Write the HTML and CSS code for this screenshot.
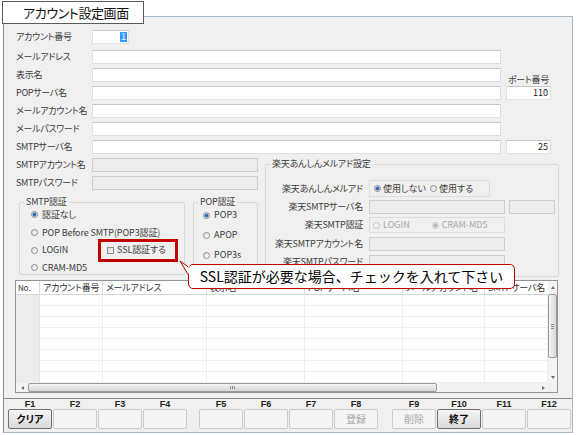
FILE: index.html
```html
<!DOCTYPE html>
<html lang="ja">
<head>
<meta charset="utf-8">
<title>アカウント設定画面</title>
<link rel="stylesheet" href="styles.css">
</head>
<body>
<div class="title">アカウント設定画面</div>
<div class="window">
  <div class="form">
    <div class="row r1"><span class="lbl">アカウント番号</span><span class="in num"><span class="sel">1</span></span></div>
    <div class="row r2"><span class="lbl">メールアドレス</span><span class="in long"></span></div>
    <div class="row"><span class="lbl">表示名</span><span class="in long"></span><span class="portlbl">ポート番号</span></div>
    <div class="row"><span class="lbl">POPサーバ名</span><span class="in long"></span><span class="in port">110</span></div>
    <div class="row"><span class="lbl">メールアカウント名</span><span class="in long"></span></div>
    <div class="row"><span class="lbl">メールパスワード</span><span class="in long"></span></div>
    <div class="row"><span class="lbl">SMTPサーバ名</span><span class="in long"></span><span class="in port">25</span></div>
    <div class="lower">
      <div class="lcol">
        <div class="row r1"><span class="lbl">SMTPアカウント名</span><span class="in mid dis"></span></div>
        <div class="row"><span class="lbl">SMTPパスワード</span><span class="in mid dis"></span></div>
        <div class="groups">
          <div class="group smtp">
            <div class="legend">SMTP認証</div>
            <div class="opt"><i class="rd on"></i>認証なし</div>
            <div class="opt"><i class="rd"></i>POP Before SMTP(POP3認証)</div>
            <div class="opt"><i class="rd"></i>LOGIN<span class="ssl"><i class="cb"></i>SSL認証する</span></div>
            <div class="opt"><i class="rd"></i>CRAM-MD5</div>
          </div>
          <div class="group pop">
            <div class="legend">POP認証</div>
            <div class="popt"><i class="rd on"></i>POP3</div>
            <div class="popt"><i class="rd"></i>APOP</div>
            <div class="popt"><i class="rd"></i>POP3s</div>
          </div>
        </div>
      </div>
      <div class="rgroup">
        <div class="legend">楽天あんしんメルアド設定</div>
        <div class="rrow rr1"><span class="rl">楽天あんしんメルアド</span><span class="rpanel p1"><i class="rd on"></i><span>使用しない</span><i class="rd r2nd"></i><span>使用する</span></span></div>
        <div class="rrow rr2"><span class="rl">楽天SMTPサーバ名</span><span class="in rin dis"></span><span class="in rsmall dis"></span></div>
        <div class="rrow rr3"><span class="rl">楽天SMTP認証</span><span class="rpanel p2 gray"><i class="rd dis"></i><span>LOGIN</span><i class="rd dis on r2nd2"></i><span>CRAM-MD5</span></span></div>
        <div class="rrow rr4"><span class="rl">楽天SMTPアカウント名</span><span class="in rin dis"></span></div>
        <div class="rrow rr4"><span class="rl">楽天SMTPパスワード</span><span class="in rin dis"></span></div>
      </div>
    </div>
  </div>

  <div class="grid">
    <div class="gmain">
      <div class="gtable">
        <div class="ghead">
          <span class="c c1">No.</span><span class="c c2">アカウント番号</span><span class="c c3">メールアドレス</span><span class="c c4">表示名</span><span class="c c5">POPサーバ名</span><span class="c c6">メールアカウント名</span><span class="c c7">SMTPサーバ名</span>
        </div>
        <div class="grow"><span class="c c1"></span><span class="c c2"></span><span class="c c3"></span><span class="c c4"></span><span class="c c5"></span><span class="c c6"></span><span class="c c7"></span></div>
        <div class="grow"><span class="c c1"></span><span class="c c2"></span><span class="c c3"></span><span class="c c4"></span><span class="c c5"></span><span class="c c6"></span><span class="c c7"></span></div>
        <div class="grow"><span class="c c1"></span><span class="c c2"></span><span class="c c3"></span><span class="c c4"></span><span class="c c5"></span><span class="c c6"></span><span class="c c7"></span></div>
        <div class="grow"><span class="c c1"></span><span class="c c2"></span><span class="c c3"></span><span class="c c4"></span><span class="c c5"></span><span class="c c6"></span><span class="c c7"></span></div>
        <div class="grow"><span class="c c1"></span><span class="c c2"></span><span class="c c3"></span><span class="c c4"></span><span class="c c5"></span><span class="c c6"></span><span class="c c7"></span></div>
        <div class="grow"><span class="c c1"></span><span class="c c2"></span><span class="c c3"></span><span class="c c4"></span><span class="c c5"></span><span class="c c6"></span><span class="c c7"></span></div>
        <div class="grow"><span class="c c1"></span><span class="c c2"></span><span class="c c3"></span><span class="c c4"></span><span class="c c5"></span><span class="c c6"></span><span class="c c7"></span></div>
        <div class="grow"><span class="c c1"></span><span class="c c2"></span><span class="c c3"></span><span class="c c4"></span><span class="c c5"></span><span class="c c6"></span><span class="c c7"></span></div>
      </div>
      <div class="vscroll">
        <div class="vs-up"><i class="tri-up"></i></div>
        <div class="vs-thumb"><i class="grip-h"></i></div>
        <div class="vs-track"></div>
        <div class="vs-down"><i class="tri-down"></i></div>
      </div>
    </div>
    <div class="hrow">
      <div class="hscroll">
        <div class="hs-left"><i class="tri-left"></i></div>
        <div class="hs-thumb"><i class="grip-v"></i></div>
        <div class="hs-track"></div>
        <div class="hs-right"><i class="tri-right"></i></div>
      </div>
      <div class="corner"></div>
    </div>
  </div>

  <div class="fkeys">
    <div class="fgroup">
      <div class="fk"><span class="fl">F1</span><span class="btn act">クリア</span></div>
      <div class="fk"><span class="fl">F2</span><span class="btn"></span></div>
      <div class="fk"><span class="fl">F3</span><span class="btn"></span></div>
      <div class="fk"><span class="fl">F4</span><span class="btn"></span></div>
    </div>
    <div class="fgroup g2">
      <div class="fk"><span class="fl">F5</span><span class="btn"></span></div>
      <div class="fk"><span class="fl">F6</span><span class="btn"></span></div>
      <div class="fk"><span class="fl">F7</span><span class="btn"></span></div>
      <div class="fk"><span class="fl">F8</span><span class="btn off">登録</span></div>
    </div>
    <div class="fgroup g3">
      <div class="fk"><span class="fl">F9</span><span class="btn off">削除</span></div>
      <div class="fk"><span class="fl">F10</span><span class="btn act">終了</span></div>
      <div class="fk"><span class="fl">F11</span><span class="btn"></span></div>
      <div class="fk"><span class="fl">F12</span><span class="btn"></span></div>
    </div>
  </div>
</div>

<svg class="tail" width="18" height="22" viewBox="0 0 18 22">
  <polygon points="13.6,8.5 4,3 13.6,17.5" fill="#fff"/>
  <polyline points="12.5,9 4,3 12.5,17" fill="none" stroke="#c00000" stroke-width="1"/>
</svg>
<div class="callout">SSL認証が必要な場合、チェックを入れて下さい</div>
</body>
</html>
```

FILE: styles.css
```css
* { box-sizing: border-box; }
html, body { margin: 0; padding: 0; }
body {
  width: 576px;
  height: 435px;
  overflow: hidden;
  position: relative;
  background: #fff;
  font-family: "Noto Sans CJK JP", sans-serif;
  font-size: 9px;
  line-height: 12px;
  color: #3c3c3c;
  font-feature-settings: "palt";
}

.title {
  position: relative;
  z-index: 1;
  margin: 1px 0 0 2px;
  width: 142px;
  height: 23px;
  border: 1px solid #5a5a5a;
  background: #fff;
  font-size: 13px;
  line-height: 21px;
  padding-left: 20px;
  letter-spacing: -0.4px;
  color: #111;
}

.window {
  margin: -8px 0 0 3px;
  width: 570px;
  height: 417px;
  border: 1px solid #a9b8c8;
  border-left-color: #8f8f8f;
  background: #f0f0f0;
  overflow: hidden;
}

/* form rows */
.form { padding: 13px 0 0 12px; }
.row { display: flex; align-items: center; height: 14px; margin-top: 4px; }
.row.r1 { margin-top: 0; }
.row.r2 { margin-top: 6px; }
.lbl { width: 76px; flex: none; white-space: nowrap; letter-spacing: -0.3px; }

.in {
  flex: none;
  display: flex;
  align-items: center;
  justify-content: flex-end;
  height: 14px;
  border: 1px solid #e0e0e0;
  border-top-color: #c9c9c9;
  background: #fff;
  padding-right: 2px;
  color: #222;
}
.in.long { width: 409px; }
.in.num { width: 37px; padding-right: 1px; }
.in.port { width: 45px; margin-left: 5px; }
.in.mid { width: 166px; }
.in.dis { background: #ececec; border-color: #cdcdcd; }
.sel { background: #3399ff; color: #fff; line-height: 10px; padding: 0 1px; }

.portlbl { align-self: flex-end; margin: 0 0 -4px 7px; white-space: nowrap; letter-spacing: -0.3px; }

/* lower section */
.lower { display: flex; height: 122px; margin-top: 4px; }
.lcol { width: 249px; flex: none; }
.groups { display: flex; margin: 12px 0 0 3px; }

.group {
  height: 73px;
  border: 1px solid #d3d9dd;
  border-radius: 2px;
}
.group.smtp { width: 166px; }
.group.pop { width: 65px; margin-left: 8px; }

.legend {
  width: fit-content;
  margin: -7px 0 0 4px;
  padding: 0 2px;
  background: #f0f0f0;
  line-height: 12px;
  white-space: nowrap;
  letter-spacing: -0.2px;
}

.opt {
  display: flex;
  align-items: center;
  height: 17.7px;
  padding: 0 9px 0 11px;
  white-space: nowrap;
  letter-spacing: -0.1px;
}
.opt:nth-child(2) { margin-top: -2px; }
.popt {
  display: flex;
  align-items: center;
  height: 20px;
  padding-left: 9px;
  white-space: nowrap;
}
.popt:nth-child(2) { margin-top: -3px; }

.rd {
  flex: none;
  width: 7px;
  height: 7px;
  border-radius: 50%;
  border: 1px solid #8c8c8c;
  background: linear-gradient(135deg, #dcdcdc, #ffffff);
  margin-right: 4px;
}
.rd.on { background: radial-gradient(circle, #1c5ea6 0, #2f73bd 1.3px, #9fbfe0 2px, #f2f2f2 2.6px); }
.rd.dis { border-color: #c4c4c4; background: #f3f3f3; }
.rd.dis.on { background: radial-gradient(circle, #a8a8a8 0, #b8b8b8 1.4px, #f3f3f3 2.4px); }

.cb {
  flex: none;
  width: 7px;
  height: 7px;
  border: 1px solid #8c8c8c;
  background: linear-gradient(135deg, #d8d8d8, #fbfbfb);
  margin-right: 3px;
}

.ssl {
  margin-left: auto;
  width: 74px;
  height: 17px;
  display: flex;
  align-items: center;
  padding-left: 6px;
  outline: 3px solid #c00000;
}

/* rakuten group */
.rgroup {
  width: 294px;
  height: 113px;
  margin-top: 6px;
  border: 1px solid #d3d9dd;
  border-radius: 2px;
}
.rgroup .legend { margin-left: 4px; }
.rrow { display: flex; align-items: center; }
.rr1 { margin-top: 10px; height: 17px; }
.rr2 { margin-top: 3px; height: 14px; }
.rr3 { margin-top: 3px; height: 16px; }
.rr4 { margin-top: 4px; height: 14px; }
.rl { width: 97px; flex: none; text-align: right; margin-right: 6px; white-space: nowrap; letter-spacing: -0.2px; }
.in.rin { width: 136px; }
.in.rsmall { width: 46px; margin-left: 4px; }

.rpanel {
  display: flex;
  align-items: center;
  height: 100%;
  border: 1px solid #dcdcdc;
  padding-left: 4px;
  white-space: nowrap;
}
.rpanel.p1 { width: 121px; }
.rpanel.p1 .rd { margin-right: 2px; }
.rpanel.p1 .r2nd { margin-left: 4px; }
.rpanel.p2 { width: 136px; padding-left: 3px; }
.rpanel.p2 .rd { margin-right: 3px; }
.rpanel.p2 .r2nd2 { margin-left: 22px; }
.gray { color: #a7a7a7; }

/* grid */
.grid {
  margin: 0 0 0 11px;
  width: 543px;
  height: 113px;
  border: 1px solid #8f949a;
  background: #fff;
  display: flex;
  flex-direction: column;
}
.gmain { display: flex; height: 102px; }
.gtable { width: 532px; flex: none; }
.ghead { display: flex; height: 14px; border-bottom: 1px solid #d5d5d5; }
.ghead .c {
  line-height: 13px;
  padding-left: 3px;
  border-right: 1px solid #dcdcdc;
  white-space: nowrap;
  overflow: hidden;
  color: #333;
  letter-spacing: -0.2px;
}
.ghead .c1 { padding-left: 2px; font-size: 8px; }
.ghead .c7 { border-right: none; }
.grow { display: flex; height: 11px; border-bottom: 1px solid #efefef; }
.grow .c { border-right: 1px solid #efefef; }
.grow .c1 { background: #ececec; border-right-color: #e2e2e2; }
.c { flex: none; height: 100%; }
.c1 { width: 24px; }
.c2 { width: 63px; }
.c3 { width: 104px; }
.c4 { width: 98px; }
.c5 { width: 98px; }
.c6 { width: 82px; }
.c7 { width: 63px; }

.vscroll {
  width: 9px;
  flex: none;
  display: flex;
  flex-direction: column;
  background: #f3f3f3;
}
.vs-up, .vs-down { display: flex; align-items: center; justify-content: center; flex: none; }
.vs-up { height: 12px; }
.vs-down { height: 11px; }
.vs-thumb {
  height: 64px;
  margin: 1px 0 0 0;
  border: 1px solid #9a9a9a;
  border-radius: 2px;
  background: linear-gradient(90deg, #f4f4f4, #dadada);
  display: flex;
  align-items: center;
  justify-content: center;
}
.vs-track { flex: 1; }
.grip-h { width: 3px; height: 5px; background: repeating-linear-gradient(#8a8a8a 0 1px, transparent 1px 2px); }

.tri-up { width: 0; height: 0; border: 2px solid transparent; border-top: 0; border-bottom: 3px solid #707070; }
.tri-down { width: 0; height: 0; border: 2px solid transparent; border-bottom: 0; border-top: 3px solid #707070; }
.tri-left { width: 0; height: 0; border: 2px solid transparent; border-left: 0; border-right: 3px solid #707070; }
.tri-right { width: 0; height: 0; border: 2px solid transparent; border-right: 0; border-left: 3px solid #707070; }

.hrow { display: flex; height: 9px; }
.hscroll { width: 532px; flex: none; display: flex; background: #f3f3f3; }
.hs-left { width: 12px; display: flex; align-items: center; justify-content: center; }
.hs-thumb {
  width: 409px;
  border: 1px solid #9a9a9a;
  border-radius: 2px;
  background: linear-gradient(#f4f4f4, #d6d6d6);
  display: flex;
  align-items: center;
  justify-content: center;
}
.grip-v { width: 5px; height: 3px; background: repeating-linear-gradient(90deg, #8a8a8a 0 1px, transparent 1px 2px); }
.hs-track { flex: 1; }
.hs-right { width: 10px; display: flex; align-items: center; justify-content: center; }
.corner { flex: 1; background: #f0f0f0; }

/* function keys */
.fkeys {
  display: flex;
  margin-top: 5px;
  border-top: 1px solid #8a8a8a;
  padding-left: 4px;
}
.fgroup { display: grid; grid-template-columns: repeat(4, 44px); column-gap: 1px; width: 179px; flex: none; }
.fgroup.g2 { margin-left: 12px; }
.fgroup.g3 { margin-left: 14px; }
.fk { display: flex; flex-direction: column; }
.fl {
  height: 10px;
  line-height: 10px;
  text-align: center;
  font-family: "Liberation Sans", sans-serif;
  font-weight: bold;
  font-size: 9px;
  color: #222;
}
.btn {
  height: 20px;
  border: 1px solid #cbcbcb;
  border-radius: 2px;
  background: #f5f5f5;
  font-size: 10px;
  line-height: 18px;
  text-align: center;
  color: #111;
}
.btn.act {
  border-color: #707070;
  background: linear-gradient(#f4f4f4, #e8e8e8 50%, #d9d9d9);
  font-weight: bold;
}
.btn.off { color: #a8a8a8; }

/* annotation callout */
.tail { position: absolute; left: 176px; top: 258px; z-index: 3; }
.callout {
  position: absolute;
  left: 188px;
  top: 264px;
  width: 327px;
  height: 25px;
  z-index: 2;
  border: 1px solid #c00000;
  border-radius: 5px;
  background: #fff;
  font-size: 14px;
  line-height: 23px;
  text-align: center;
  color: #000;
  font-feature-settings: normal;
}
```
